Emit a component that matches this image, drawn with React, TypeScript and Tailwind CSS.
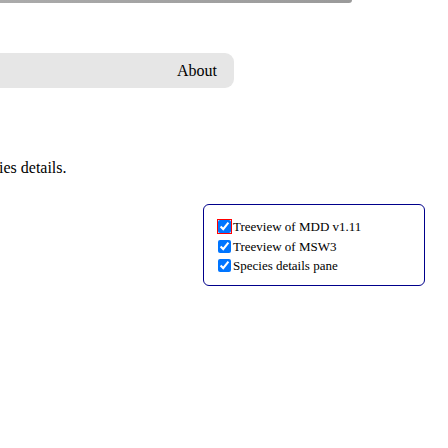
import React, { useState } from 'react';

const PANES = [
  { id: 'mdd', label: 'Treeview of MDD v1.11' },
  { id: 'msw3', label: 'Treeview of MSW3' },
  { id: 'details', label: 'Species details pane' },
];

export default function App() {
  const [checked, setChecked] = useState<{ [key: string]: boolean }>({ mdd: true, msw3: true, details: true });

  return (
    <div className="w-[448px] h-[448px] overflow-hidden bg-white text-black font-['Liberation_Serif',serif]">
      {/* header shadow */}
      <div className="w-[352px] h-[3px] bg-gradient-to-r from-[#ababab] to-[#9a9a9a] rounded-br-[8px]" />

      {/* nav bar */}
      <nav className="mt-[50px] w-[234px] h-[35px] bg-[#e6e6e6] rounded-r-[9px] flex items-center justify-end pr-[17px]">
        <span className="text-[16px] leading-none">About</span>
      </nav>

      <p className="mt-[71px] text-[16px] leading-[18px] -ml-[1px]">ies details.</p>

      {/* settings panel */}
      <div className="ml-[203px] mt-[27px] w-[222px] h-[82px] border border-[#00008b] rounded-[6px] pl-[14px] pt-[12px]">
        {PANES.map((pane, i) => (
          <label key={pane.id} className="flex items-center h-[19.5px] cursor-pointer">
            <input
              type="checkbox"
              checked={checked[pane.id]}
              onChange={() => setChecked({ ...checked, [pane.id]: !checked[pane.id] })}
              className={`w-[13px] h-[13px] m-0 mr-[2px] accent-[#0075ff] ${i === 0 ? 'outline outline-1 outline-[#ff0000]' : ''}`}
            />
            <span className="text-[13px] leading-none whitespace-nowrap">{pane.label}</span>
          </label>
        ))}
      </div>
    </div>
  );
}
